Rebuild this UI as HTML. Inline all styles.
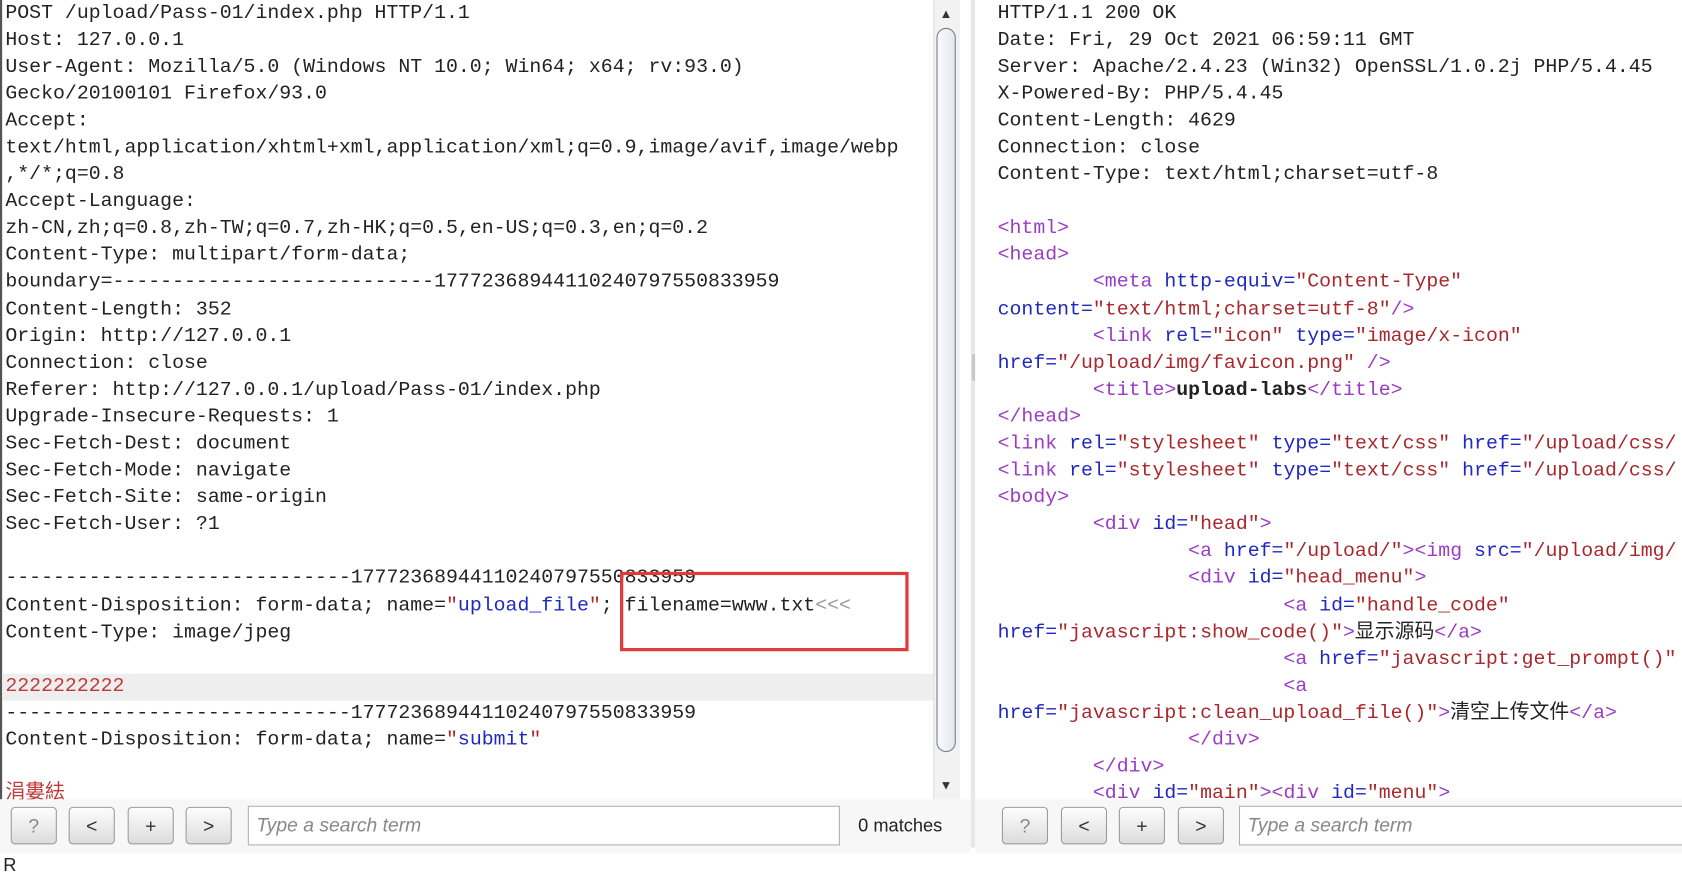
<!DOCTYPE html>
<html><head><meta charset="utf-8"><style>
html,body{margin:0;padding:0;background:#fff;overflow:hidden;width:1682px;height:868px}
#w{position:absolute;left:0;top:0;width:1568px;height:809px;transform:scale(1.0727,1.0729);transform-origin:0 0;background:#fff}
.p{position:absolute;top:-0.5px;margin:0;font-family:"Liberation Mono","Noto Sans CJK SC",monospace;font-size:18.5px;line-height:25.1px;white-space:pre;color:#222;letter-spacing:0}
.t{color:#9a3cc6}.a{color:#1f28c0}.v{color:#a8282c}.g{color:#999}.b{font-weight:bold}
.btn{position:absolute;top:752px;width:43px;height:35px;border:1px solid #9a9a9a;border-radius:4px;background:linear-gradient(#fdfdfd,#dcdcdc);font-family:"Liberation Sans",sans-serif;font-size:18px;text-align:center;line-height:35px;color:#333;box-sizing:border-box}
.srch{position:absolute;top:751px;height:37px;border:1px solid #b0b0b0;background:#fff;box-sizing:border-box;font-family:"Liberation Sans",sans-serif;font-style:italic;font-size:18px;color:#888;padding-left:7px;line-height:35px}
</style></head><body><div id="w">
<div style="position:absolute;left:0;top:0;width:2px;height:745px;background:#555"></div>
<div style="position:absolute;left:2px;top:628px;width:868px;height:25px;background:#eeeeee"></div>
<pre class="p" style="left:5px">POST /upload/Pass-01/index.php HTTP/1.1
Host: 127.0.0.1
User-Agent: Mozilla/5.0 (Windows NT 10.0; Win64; x64; rv:93.0)
Gecko/20100101 Firefox/93.0
Accept:
text/html,application/xhtml+xml,application/xml;q=0.9,image/avif,image/webp
,*/*;q=0.8
Accept-Language:
zh-CN,zh;q=0.8,zh-TW;q=0.7,zh-HK;q=0.5,en-US;q=0.3,en;q=0.2
Content-Type: multipart/form-data;
boundary=---------------------------17772368944110240797550833959
Content-Length: 352
Origin: http://127.0.0.1
Connection: close
Referer: http://127.0.0.1/upload/Pass-01/index.php
Upgrade-Insecure-Requests: 1
Sec-Fetch-Dest: document
Sec-Fetch-Mode: navigate
Sec-Fetch-Site: same-origin
Sec-Fetch-User: ?1

-----------------------------17772368944110240797550833959
Content-Disposition: form-data; name=<span class="v">"</span><span class="a">upload_file</span><span class="v">"</span>; filename=www.txt<span class="g">&lt;&lt;&lt;</span>
Content-Type: image/jpeg

<span style="color:#c0393b">2222222222</span>
-----------------------------17772368944110240797550833959
Content-Disposition: form-data; name=<span class="v">"</span><span class="a">submit</span><span class="v">"</span>

<span style="color:#c0393b">涓婁紶</span></pre>
<div style="position:absolute;left:578px;top:533px;width:269px;height:74px;border:3px solid #e03a3a;box-sizing:border-box"></div>
<div style="position:absolute;left:870px;top:0;width:24px;height:745px;background:#f2f2f2;border-left:1px solid #ddd"></div>
<div style="position:absolute;left:876px;top:6px;font-size:12px;color:#333">▲</div>
<div style="position:absolute;left:873px;top:26px;width:18px;height:675px;border-radius:10px;background:linear-gradient(90deg,#fafafa,#e4e8ee);border:1px solid #6f7f90;box-sizing:border-box"></div>
<div style="position:absolute;left:876px;top:725px;font-size:12px;color:#333">▼</div>
<div style="position:absolute;left:905px;top:0;width:4px;height:790px;background:#e8e8e8"></div>
<div style="position:absolute;left:906px;top:330px;width:3px;height:25px;background:#c8c8c8"></div>
<pre class="p" style="left:930px;width:640px;overflow:hidden;height:745px">HTTP/1.1 200 OK
Date: Fri, 29 Oct 2021 06:59:11 GMT
Server: Apache/2.4.23 (Win32) OpenSSL/1.0.2j PHP/5.4.45
X-Powered-By: PHP/5.4.45
Content-Length: 4629
Connection: close
Content-Type: text/html;charset=utf-8

<span class="t">&lt;html&gt;</span>
<span class="t">&lt;head&gt;</span>
        <span class="t">&lt;meta </span><span class="a">http-equiv=</span><span class="v">"Content-Type"</span>
<span class="a">content=</span><span class="v">"text/html;charset=utf-8"</span><span class="t">/&gt;</span>
        <span class="t">&lt;link </span><span class="a">rel=</span><span class="v">"icon"</span> <span class="a">type=</span><span class="v">"image/x-icon"</span>
<span class="a">href=</span><span class="v">"/upload/img/favicon.png"</span> <span class="t">/&gt;</span>
        <span class="t">&lt;title&gt;</span><span class="b">upload-labs</span><span class="t">&lt;/title&gt;</span>
<span class="t">&lt;/head&gt;</span>
<span class="t">&lt;link </span><span class="a">rel=</span><span class="v">"stylesheet"</span> <span class="a">type=</span><span class="v">"text/css"</span> <span class="a">href=</span><span class="v">"/upload/css/</span>
<span class="t">&lt;link </span><span class="a">rel=</span><span class="v">"stylesheet"</span> <span class="a">type=</span><span class="v">"text/css"</span> <span class="a">href=</span><span class="v">"/upload/css/</span>
<span class="t">&lt;body&gt;</span>
        <span class="t">&lt;div </span><span class="a">id=</span><span class="v">"head"</span><span class="t">&gt;</span>
                <span class="t">&lt;a </span><span class="a">href=</span><span class="v">"/upload/"</span><span class="t">&gt;&lt;img </span><span class="a">src=</span><span class="v">"/upload/img/</span>
                <span class="t">&lt;div </span><span class="a">id=</span><span class="v">"head_menu"</span><span class="t">&gt;</span>
                        <span class="t">&lt;a </span><span class="a">id=</span><span class="v">"handle_code"</span>
<span class="a">href=</span><span class="v">"javascript:show_code()"</span><span class="t">&gt;</span>显示源码<span class="t">&lt;/a&gt;</span>
                        <span class="t">&lt;a </span><span class="a">href=</span><span class="v">"javascript:get_prompt()"</span>
                        <span class="t">&lt;a</span>
<span class="a">href=</span><span class="v">"javascript:clean_upload_file()"</span><span class="t">&gt;</span>清空上传文件<span class="t">&lt;/a&gt;</span>
                <span class="t">&lt;/div&gt;</span>
        <span class="t">&lt;/div&gt;</span>
        <span class="t">&lt;div </span><span class="a">id=</span><span class="v">"main"</span><span class="t">&gt;&lt;div </span><span class="a">id=</span><span class="v">"menu"</span><span class="t">&gt;</span></pre>
<div style="position:absolute;left:0;top:745px;width:905px;height:50px;background:#f7f7f7"></div>
<div style="position:absolute;left:909px;top:745px;width:660px;height:50px;background:#f7f7f7"></div>
<div class="btn" style="left:10px;color:#888">?</div>
<div class="btn" style="left:64px">&lt;</div>
<div class="btn" style="left:119px">+</div>
<div class="btn" style="left:173px">&gt;</div>
<div class="srch" style="left:231px;width:552px">Type a search term</div>
<div style="position:absolute;left:800px;top:752px;line-height:35px;font-family:'Liberation Sans',sans-serif;font-size:17px;color:#222">0 matches</div>
<div class="btn" style="left:934px;color:#888">?</div>
<div class="btn" style="left:989px">&lt;</div>
<div class="btn" style="left:1043px">+</div>
<div class="btn" style="left:1098px">&gt;</div>
<div class="srch" style="left:1155px;width:420px">Type a search term</div>
<div style="position:absolute;left:3px;top:797px;font-family:'Liberation Sans',sans-serif;font-size:17px;color:#222;line-height:20px">R</div>
</div></body></html>
